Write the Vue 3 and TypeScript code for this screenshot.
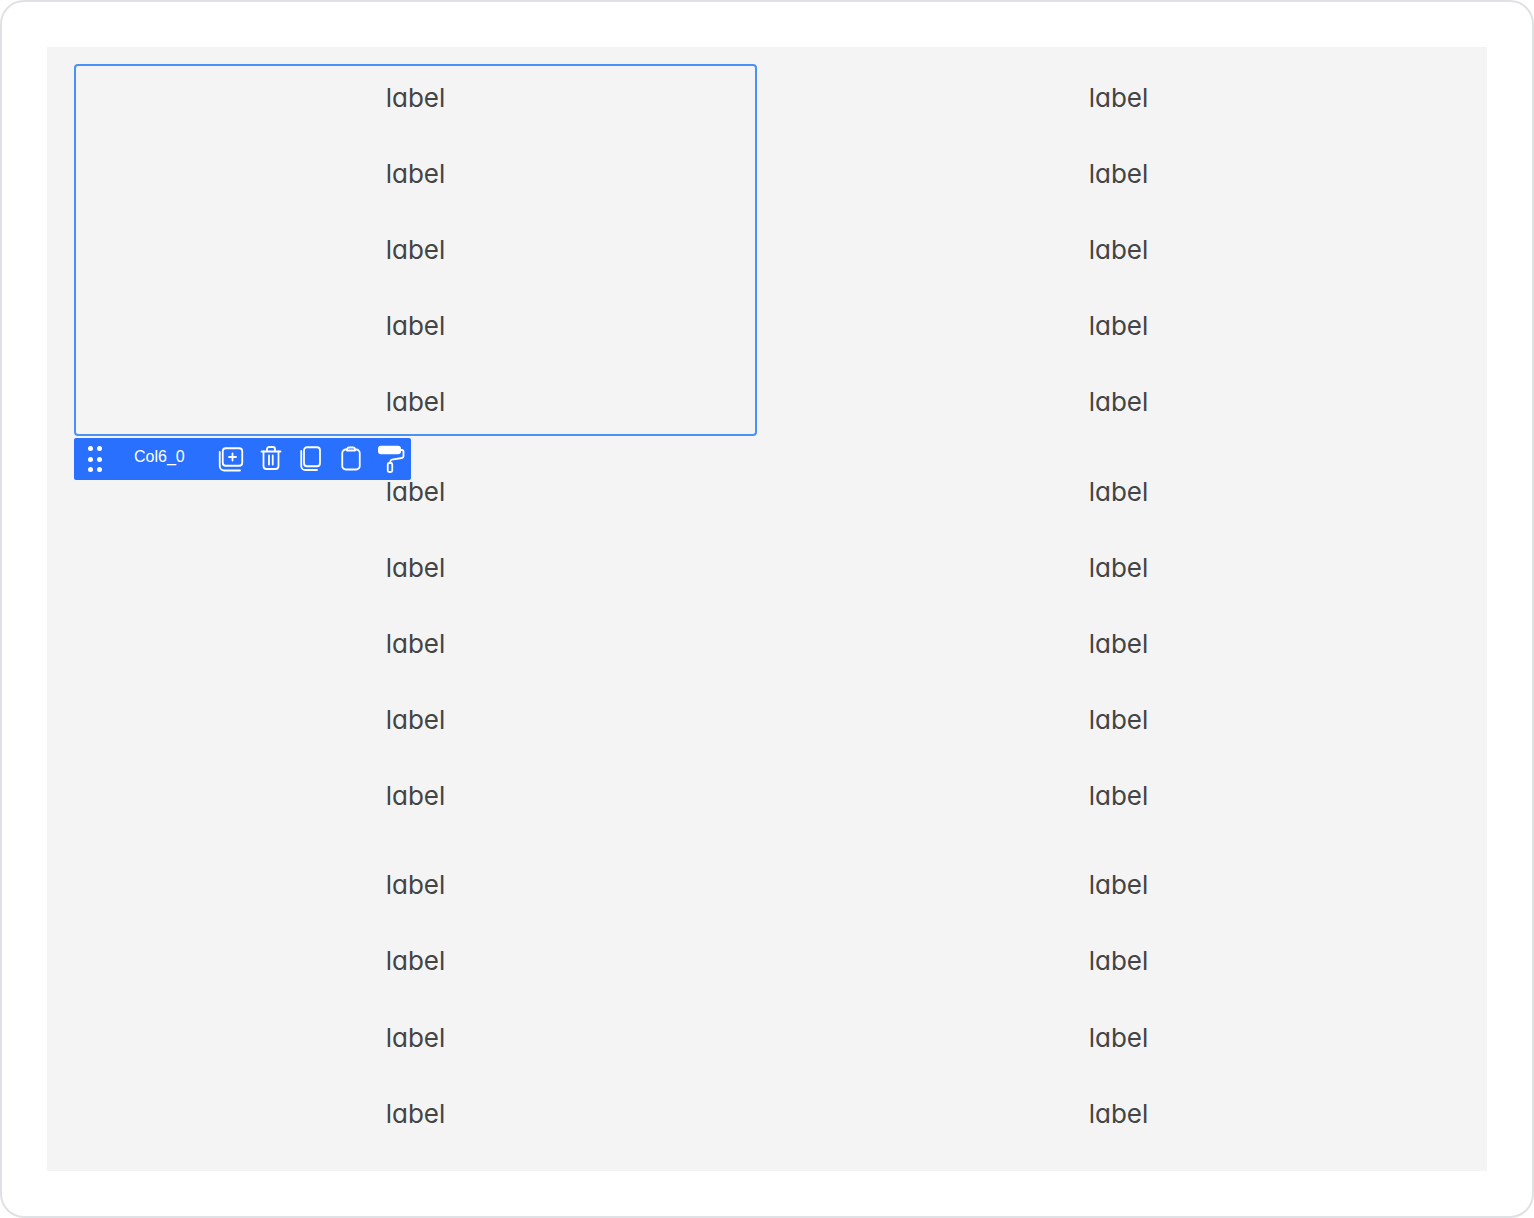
<script setup lang="ts">
const groups = [
  { id: 'a', rows: 5 },
  { id: 'b', rows: 5 },
  { id: 'c', rows: 4 }
]
const columns = ['Col6_0', 'Col6_1']
const dots = Array.from({ length: 6 }, (_, index) => index)

const rowsOf = (count: number) => Array.from({ length: count }, (_, index) => index)
</script>

<template>
  <div class="frame">
    <div class="canvas">
      <div v-for="group in groups" :key="group.id" class="row" :class="`row-${group.id}`">
        <div
          v-for="(column, index) in columns"
          :key="column"
          class="col"
          :class="{ selected: group.id === 'a' && index === 0 }"
        >
          <div v-for="item in rowsOf(group.rows)" :key="item" class="label">label</div>

          <div v-if="group.id === 'a' && index === 0" class="toolbar">
            <div class="drag">
              <span v-for="dot in dots" :key="dot" class="dot" />
            </div>
            <span class="name">{{ column }}</span>
            <div class="actions">
              <button class="action" type="button" aria-label="add">
                <svg viewBox="0 0 28 28" width="28" height="28">
                  <rect x="5.75" y="3.25" width="19.5" height="17.5" rx="3" />
                  <path d="M2.75 7v14a4.5 4.5 0 0 0 4.5 4.5H23" />
                  <path d="M15.5 8.5v7M12 12h7" />
                </svg>
              </button>
              <button class="action" type="button" aria-label="delete">
                <svg viewBox="0 0 28 28" width="28" height="28">
                  <path d="M4.5 6.5h19" />
                  <path d="M10 6V4a2 2 0 0 1 2-2h4a2 2 0 0 1 2 2v2" />
                  <path d="M6.5 6.5V21a3 3 0 0 0 3 3h9a3 3 0 0 0 3-3V6.5" />
                  <path d="M12 10.5v9M15.75 10.5v9" />
                </svg>
              </button>
              <button class="action" type="button" aria-label="copy">
                <svg viewBox="0 0 28 28" width="28" height="28">
                  <rect x="7" y="2.25" width="16" height="19" rx="3" />
                  <path d="M4.25 6v15a4 4 0 0 0 4 4H20" />
                </svg>
              </button>
              <button class="action" type="button" aria-label="paste">
                <svg viewBox="0 0 28 28" width="28" height="28">
                  <path d="M10 4.5H8.75a3.5 3.5 0 0 0-3.5 3.5v13a3.5 3.5 0 0 0 3.5 3.5h10.5a3.5 3.5 0 0 0 3.5-3.5V8a3.5 3.5 0 0 0-3.5-3.5H18" />
                  <path d="M10 4.5a2 2 0 0 1 2-2h4a2 2 0 0 1 2 2v1H10z" />
                </svg>
              </button>
              <button class="action" type="button" aria-label="format">
                <svg viewBox="0 0 28 28" width="28" height="28">
                  <rect class="solid" x="1" y="0.75" width="23" height="8.5" rx="3" />
                  <path d="M24 5h1a1.5 1.5 0 0 1 1.5 1.5V11a2 2 0 0 1-1.7 2L15 14.7a2 2 0 0 0-1.7 2V18" />
                  <rect x="10.75" y="18" width="4.5" height="9" rx="1.5" />
                </svg>
              </button>
            </div>
          </div>
        </div>
      </div>
    </div>
  </div>
</template>

<style scoped>
.frame {
  box-sizing: border-box;
  width: 1534px;
  height: 1218px;
  padding: 45px 45px;
  background: #fff;
  border: 2px solid #dfe1e5;
  border-radius: 24px;
}

.canvas {
  box-sizing: border-box;
  height: 1124px;
  padding: 17px 27px 0;
  background: #f4f4f4;
  display: flex;
  flex-direction: column;
  gap: 22px;
}

.row {
  display: grid;
  grid-template-columns: 683px 683px;
  gap: 20px;
}

.row-c {
  margin-top: -1px;
}

.col {
  box-sizing: border-box;
  position: relative;
  padding: 12px 0;
  border: 2px solid transparent;
  border-radius: 4px;
  display: flex;
  flex-direction: column;
  gap: 36px;
}

.row-c .col {
  gap: 36.33px;
}

.col.selected {
  border-color: #4a90f5;
}

.label {
  height: 40px;
  line-height: 40px;
  text-align: center;
  font-family: Inter, "Noto Sans", sans-serif;
  font-size: 26px;
  font-feature-settings: "cv11";
  color: #444;
}

.toolbar {
  position: absolute;
  top: calc(100% + 4px);
  left: -2px;
  z-index: 2;
  box-sizing: border-box;
  width: 337px;
  height: 42px;
  display: flex;
  align-items: center;
  background: #2970ff;
  border-radius: 2px;
  color: #fff;
}

.drag {
  width: 60px;
  padding-left: 14px;
  box-sizing: border-box;
  display: grid;
  grid-template-columns: repeat(2, 5px);
  column-gap: 4px;
  row-gap: 5.5px;
}

.dot {
  width: 5px;
  height: 5px;
  border-radius: 50%;
  background: #fff;
}

.name {
  width: 51px;
  margin-top: -4px;
  font-family: "Liberation Sans", Arial, sans-serif;
  font-size: 16px;
  line-height: 20px;
  white-space: nowrap;
}

.actions {
  display: flex;
  margin-left: 26px;
}

.action {
  width: 40px;
  height: 42px;
  padding: 0;
  border: 0;
  background: none;
  display: flex;
  align-items: center;
  justify-content: center;
}

.action svg {
  display: block;
  fill: none;
  stroke: #fff;
  stroke-width: 1.8;
  stroke-linecap: round;
  stroke-linejoin: round;
}

.action svg .solid {
  fill: #fff;
  stroke: none;
}
</style>

<style>
html,
body {
  margin: 0;
  background: #fff;
}
</style>
